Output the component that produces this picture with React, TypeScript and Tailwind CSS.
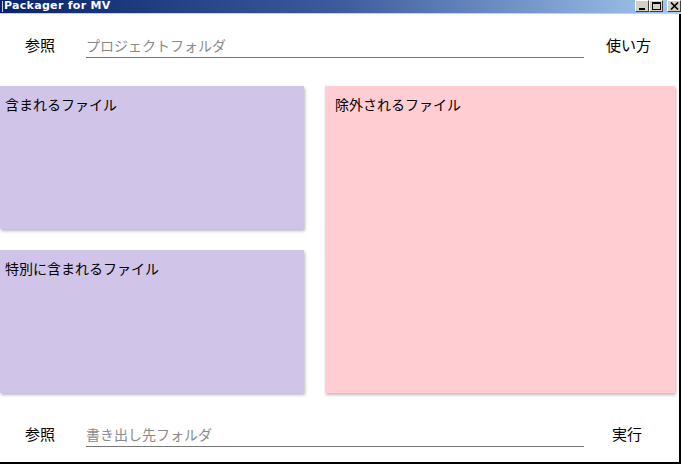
import React from 'react'

const font = { fontFamily: '"Noto Sans CJK JP", "Noto Sans", sans-serif' }

const TitleButton = ({ children, className = '' }: { children: React.ReactNode, className?: string }) => (
    <div className={"w-[14px] h-[12px] bg-[#d4d0c8] border-t border-l border-white border-r border-b border-r-[#404040] border-b-[#404040] flex items-center justify-center " + className}>
        {children}
    </div>
)

const FileRow = ({ placeholder, action, actionClass }: { placeholder: string, action: string, actionClass: string }) => (
    <div className="flex items-start text-[15px] leading-[20px] text-black">
        <span className="ml-[25px] w-[61px] text-[15px]">参照</span>
        <div className="w-[498px] border-b border-[#777] pb-[2px] text-[14px] text-[#8a8a8a]">{placeholder}</div>
        <span className={actionClass}>{action}</span>
    </div>
)

const Panel = ({ title, className }: { title: string, className: string }) => (
    <div className={"shadow-[1px_2px_3px_rgba(0,0,0,0.28)] px-[5px] pt-[8px] text-[14px] leading-[20px] text-black " + className}>
        {title}
    </div>
)

const App = () => {
    return (
        <div className="w-[681px] h-[464px] bg-white flex flex-col overflow-hidden" style={font}>
            {/* title bar */}
            <div className="h-[14px] flex items-start bg-gradient-to-r from-[#0a246a] via-[#3d5c9c] to-[#a6caf0] border-b border-[#d4d0c8]">
                <div className="w-[3px] h-[11px] mt-[1px] border-r border-[#d4d0c8]" />
                <span className="ml-[1px] text-white font-bold text-[11px] leading-[12px] tracking-[0.3px]" style={{ fontFamily: '"DejaVu Sans", sans-serif' }}>Packager for MV</span>
                <div className="ml-auto flex">
                    <TitleButton>
                        <div className="w-[6px] h-[2px] bg-black mt-[6px]" />
                    </TitleButton>
                    <TitleButton className="mr-[4px]">
                        <div className="w-[9px] h-[8px] border border-black border-t-2" />
                    </TitleButton>
                    <TitleButton>
                        <svg width="9" height="8" viewBox="0 0 9 8">
                            <path d="M1 0.5 L8 7.5 M8 0.5 L1 7.5" stroke="black" strokeWidth="1.6" />
                        </svg>
                    </TitleButton>
                </div>
            </div>

            {/* body */}
            <div className="flex-1 flex flex-col border-r-2 border-b-2 border-black">
                <div className="mt-[21px]">
                    <FileRow placeholder="プロジェクトフォルダ" action="使い方" actionClass="ml-[22px]" />
                </div>

                <div className="mt-[28px] flex gap-[21px]">
                    <div className="w-[304px] flex flex-col gap-[21px]">
                        <Panel title="含まれるファイル" className="h-[143px] bg-[#d1c4e9]" />
                        <Panel title="特別に含まれるファイル" className="h-[143px] bg-[#d1c4e9]" />
                    </div>
                    <Panel title="除外されるファイル" className="w-[350px] h-[307px] bg-[#ffcdd2] px-[10px]" />
                </div>

                <div className="mt-[31px]">
                    <FileRow placeholder="書き出し先フォルダ" action="実行" actionClass="ml-[28px]" />
                </div>
            </div>
        </div>
    )
}

export default App
